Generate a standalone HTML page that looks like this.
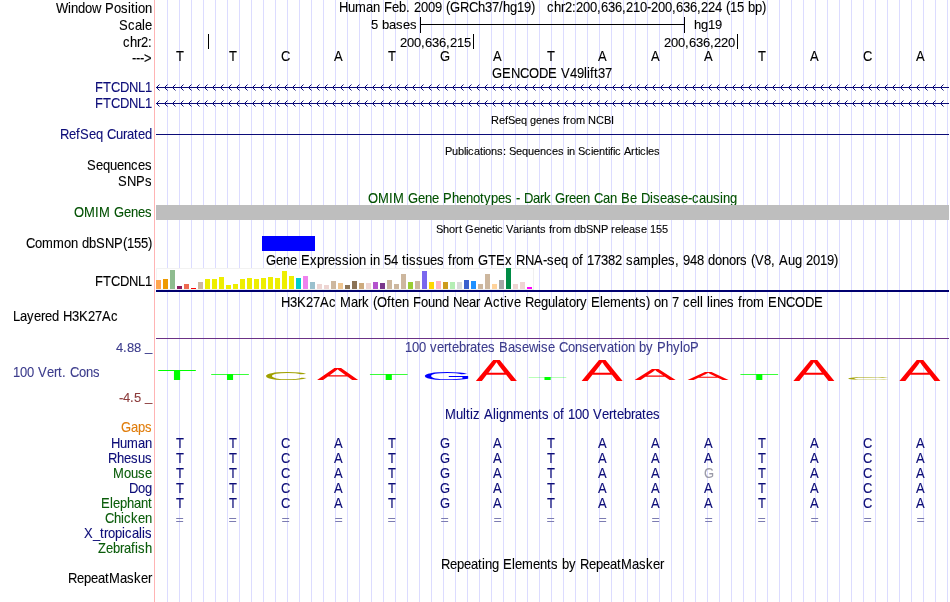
<!DOCTYPE html>
<html><head><meta charset="utf-8"><title>UCSC Genome Browser</title>
<style>html,body{margin:0;padding:0;background:#fff;overflow:hidden}svg{display:block;will-change:transform;font-family:"Liberation Sans",Arial,Helvetica,sans-serif}text{white-space:pre;font-kerning:none;font-variant-ligatures:none;stroke-width:0.1px;paint-order:stroke}</style>
</head><body>
<svg width="950" height="602" viewBox="0 0 950 602">
<rect width="950" height="602" fill="#fff"/>
<g fill="#DCDCFF" shape-rendering="crispEdges">
<rect x="167" y="0" width="1" height="602"/>
<rect x="179" y="0" width="1" height="602"/>
<rect x="191" y="0" width="1" height="602"/>
<rect x="203" y="0" width="1" height="602"/>
<rect x="215" y="0" width="1" height="602"/>
<rect x="227" y="0" width="1" height="602"/>
<rect x="239" y="0" width="1" height="602"/>
<rect x="251" y="0" width="1" height="602"/>
<rect x="263" y="0" width="1" height="602"/>
<rect x="275" y="0" width="1" height="602"/>
<rect x="287" y="0" width="1" height="602"/>
<rect x="299" y="0" width="1" height="602"/>
<rect x="311" y="0" width="1" height="602"/>
<rect x="323" y="0" width="1" height="602"/>
<rect x="335" y="0" width="1" height="602"/>
<rect x="347" y="0" width="1" height="602"/>
<rect x="359" y="0" width="1" height="602"/>
<rect x="371" y="0" width="1" height="602"/>
<rect x="383" y="0" width="1" height="602"/>
<rect x="395" y="0" width="1" height="602"/>
<rect x="407" y="0" width="1" height="602"/>
<rect x="419" y="0" width="1" height="602"/>
<rect x="431" y="0" width="1" height="602"/>
<rect x="443" y="0" width="1" height="602"/>
<rect x="455" y="0" width="1" height="602"/>
<rect x="467" y="0" width="1" height="602"/>
<rect x="479" y="0" width="1" height="602"/>
<rect x="491" y="0" width="1" height="602"/>
<rect x="503" y="0" width="1" height="602"/>
<rect x="515" y="0" width="1" height="602"/>
<rect x="527" y="0" width="1" height="602"/>
<rect x="539" y="0" width="1" height="602"/>
<rect x="551" y="0" width="1" height="602"/>
<rect x="563" y="0" width="1" height="602"/>
<rect x="575" y="0" width="1" height="602"/>
<rect x="587" y="0" width="1" height="602"/>
<rect x="599" y="0" width="1" height="602"/>
<rect x="611" y="0" width="1" height="602"/>
<rect x="623" y="0" width="1" height="602"/>
<rect x="635" y="0" width="1" height="602"/>
<rect x="647" y="0" width="1" height="602"/>
<rect x="659" y="0" width="1" height="602"/>
<rect x="671" y="0" width="1" height="602"/>
<rect x="683" y="0" width="1" height="602"/>
<rect x="695" y="0" width="1" height="602"/>
<rect x="707" y="0" width="1" height="602"/>
<rect x="719" y="0" width="1" height="602"/>
<rect x="731" y="0" width="1" height="602"/>
<rect x="743" y="0" width="1" height="602"/>
<rect x="755" y="0" width="1" height="602"/>
<rect x="767" y="0" width="1" height="602"/>
<rect x="779" y="0" width="1" height="602"/>
<rect x="791" y="0" width="1" height="602"/>
<rect x="803" y="0" width="1" height="602"/>
<rect x="815" y="0" width="1" height="602"/>
<rect x="827" y="0" width="1" height="602"/>
<rect x="839" y="0" width="1" height="602"/>
<rect x="851" y="0" width="1" height="602"/>
<rect x="863" y="0" width="1" height="602"/>
<rect x="875" y="0" width="1" height="602"/>
<rect x="887" y="0" width="1" height="602"/>
<rect x="899" y="0" width="1" height="602"/>
<rect x="911" y="0" width="1" height="602"/>
<rect x="923" y="0" width="1" height="602"/>
<rect x="935" y="0" width="1" height="602"/>
<rect x="947" y="0" width="1" height="602"/>
</g>
<rect x="154" y="0" width="1" height="602" fill="#FFB4B4" shape-rendering="crispEdges"/>
<text transform="scale(0.9286 1)" x="60.31 73.23 76.46 84.00 91.54 99.08 108.77 113.08 122.77 130.31 137.85 141.08 145.38 148.62 156.15" y="13" font-size="14.0" fill="#000" stroke="#000">Window Position</text>
<text transform="scale(0.9286 1)" x="128.15 137.85 145.38 152.92 156.15" y="30" font-size="14.0" fill="#000" stroke="#000">Scale</text>
<text transform="scale(0.9286 1)" x="132.46 140.00 147.54 151.85 159.38" y="47" font-size="14.0" fill="#000" stroke="#000">chr2:</text>
<text transform="scale(0.9286 1)" x="142.15 146.46 150.77 155.08" y="63" font-size="14.0" fill="#000" stroke="#000">---&gt;</text>
<text transform="scale(0.9286 1)" x="365.08 374.77 382.31 394.15 401.69 409.23 413.54 422.15 429.69 437.23 441.54 445.85 453.38 460.92 468.46 476.00 480.31 484.62 495.38 505.08 514.77 522.31 529.85 537.38 541.69 549.23 556.77 564.31 571.85 576.15 580.46 584.77 589.08 596.62 604.15 608.46 616.00 620.31 627.85 635.38 642.92 647.23 654.77 662.31 669.85 674.15 681.69 689.23 696.77 701.08 708.62 716.15 723.69 728.00 735.54 743.08 750.62 754.92 762.46 770.00 777.54 781.85 786.15 793.69 801.23 805.54 813.08 820.62" y="12" font-size="14.0" fill="#000" stroke="#000">Human Feb. 2009 (GRCh37/hg19)   chr2:200,636,210-200,636,224 (15 bp)</text>
<text transform="scale(0.9848 1)" x="376.71 383.82 387.88 394.98 402.09 409.20 416.31" y="28.7" font-size="13.2" fill="#000" stroke="#000">5 bases</text>
<text transform="scale(0.9848 1)" x="704.68 711.78 718.89 726.00" y="28.7" font-size="13.2" fill="#000" stroke="#000">hg19</text>
<g fill="#000" shape-rendering="crispEdges">
<rect x="420" y="17" width="1" height="16"/><rect x="684" y="17" width="1" height="16"/><rect x="420" y="24" width="265" height="1"/>
<rect x="208" y="34" width="1" height="15"/>
<rect x="473" y="34" width="1" height="15"/>
<rect x="737" y="34" width="1" height="15"/>
</g>
<text transform="scale(0.9848 1)" x="406.15 413.26 420.37 427.48 431.54 438.65 445.75 452.86 456.92 464.03 471.14" y="47" font-size="13.2" fill="#000" stroke="#000">200,636,215</text>
<text transform="scale(0.9848 1)" x="674.22 681.32 688.43 695.54 699.60 706.71 713.82 720.92 724.98 732.09 739.20" y="47" font-size="13.2" fill="#000" stroke="#000">200,636,220</text>
<text transform="scale(0.9286 1)" x="189.54" y="61" font-size="14.0" fill="#000" stroke="#000">T</text>
<text transform="scale(0.9286 1)" x="246.62" y="61" font-size="14.0" fill="#000" stroke="#000">T</text>
<text transform="scale(0.9286 1)" x="302.62" y="61" font-size="14.0" fill="#000" stroke="#000">C</text>
<text transform="scale(0.9286 1)" x="359.69" y="61" font-size="14.0" fill="#000" stroke="#000">A</text>
<text transform="scale(0.9286 1)" x="417.85" y="61" font-size="14.0" fill="#000" stroke="#000">T</text>
<text transform="scale(0.9286 1)" x="473.85" y="61" font-size="14.0" fill="#000" stroke="#000">G</text>
<text transform="scale(0.9286 1)" x="530.92" y="61" font-size="14.0" fill="#000" stroke="#000">A</text>
<text transform="scale(0.9286 1)" x="589.08" y="61" font-size="14.0" fill="#000" stroke="#000">T</text>
<text transform="scale(0.9286 1)" x="644.00" y="61" font-size="14.0" fill="#000" stroke="#000">A</text>
<text transform="scale(0.9286 1)" x="701.08" y="61" font-size="14.0" fill="#000" stroke="#000">A</text>
<text transform="scale(0.9286 1)" x="758.15" y="61" font-size="14.0" fill="#000" stroke="#000">A</text>
<text transform="scale(0.9286 1)" x="816.31" y="61" font-size="14.0" fill="#000" stroke="#000">T</text>
<text transform="scale(0.9286 1)" x="872.31" y="61" font-size="14.0" fill="#000" stroke="#000">A</text>
<text transform="scale(0.9286 1)" x="929.38" y="61" font-size="14.0" fill="#000" stroke="#000">C</text>
<text transform="scale(0.9286 1)" x="986.46" y="61" font-size="14.0" fill="#000" stroke="#000">A</text>
<text transform="scale(0.9286 1)" x="529.85 540.62 550.31 560.00 569.69 580.46 590.15 599.85 604.15 613.85 621.38 628.92 632.15 635.38 639.69 644.00 651.54" y="78" font-size="14.0" fill="#000" stroke="#000">GENCODE V49lift37</text>
<rect x="156" y="87" width="793" height="1" fill="#0C0C78" shape-rendering="crispEdges"/>
<path d="M159.5 84.5L156.5 87.5L159.5 90.5M167.5 84.5L164.5 87.5L167.5 90.5M175.5 84.5L172.5 87.5L175.5 90.5M183.5 84.5L180.5 87.5L183.5 90.5M191.5 84.5L188.5 87.5L191.5 90.5M199.5 84.5L196.5 87.5L199.5 90.5M207.5 84.5L204.5 87.5L207.5 90.5M215.5 84.5L212.5 87.5L215.5 90.5M223.5 84.5L220.5 87.5L223.5 90.5M231.5 84.5L228.5 87.5L231.5 90.5M239.5 84.5L236.5 87.5L239.5 90.5M247.5 84.5L244.5 87.5L247.5 90.5M255.5 84.5L252.5 87.5L255.5 90.5M263.5 84.5L260.5 87.5L263.5 90.5M271.5 84.5L268.5 87.5L271.5 90.5M279.5 84.5L276.5 87.5L279.5 90.5M287.5 84.5L284.5 87.5L287.5 90.5M295.5 84.5L292.5 87.5L295.5 90.5M303.5 84.5L300.5 87.5L303.5 90.5M311.5 84.5L308.5 87.5L311.5 90.5M319.5 84.5L316.5 87.5L319.5 90.5M327.5 84.5L324.5 87.5L327.5 90.5M335.5 84.5L332.5 87.5L335.5 90.5M343.5 84.5L340.5 87.5L343.5 90.5M351.5 84.5L348.5 87.5L351.5 90.5M359.5 84.5L356.5 87.5L359.5 90.5M367.5 84.5L364.5 87.5L367.5 90.5M375.5 84.5L372.5 87.5L375.5 90.5M383.5 84.5L380.5 87.5L383.5 90.5M391.5 84.5L388.5 87.5L391.5 90.5M399.5 84.5L396.5 87.5L399.5 90.5M407.5 84.5L404.5 87.5L407.5 90.5M415.5 84.5L412.5 87.5L415.5 90.5M423.5 84.5L420.5 87.5L423.5 90.5M431.5 84.5L428.5 87.5L431.5 90.5M439.5 84.5L436.5 87.5L439.5 90.5M447.5 84.5L444.5 87.5L447.5 90.5M455.5 84.5L452.5 87.5L455.5 90.5M463.5 84.5L460.5 87.5L463.5 90.5M471.5 84.5L468.5 87.5L471.5 90.5M479.5 84.5L476.5 87.5L479.5 90.5M487.5 84.5L484.5 87.5L487.5 90.5M495.5 84.5L492.5 87.5L495.5 90.5M503.5 84.5L500.5 87.5L503.5 90.5M511.5 84.5L508.5 87.5L511.5 90.5M519.5 84.5L516.5 87.5L519.5 90.5M527.5 84.5L524.5 87.5L527.5 90.5M535.5 84.5L532.5 87.5L535.5 90.5M543.5 84.5L540.5 87.5L543.5 90.5M551.5 84.5L548.5 87.5L551.5 90.5M559.5 84.5L556.5 87.5L559.5 90.5M567.5 84.5L564.5 87.5L567.5 90.5M575.5 84.5L572.5 87.5L575.5 90.5M583.5 84.5L580.5 87.5L583.5 90.5M591.5 84.5L588.5 87.5L591.5 90.5M599.5 84.5L596.5 87.5L599.5 90.5M607.5 84.5L604.5 87.5L607.5 90.5M615.5 84.5L612.5 87.5L615.5 90.5M623.5 84.5L620.5 87.5L623.5 90.5M631.5 84.5L628.5 87.5L631.5 90.5M639.5 84.5L636.5 87.5L639.5 90.5M647.5 84.5L644.5 87.5L647.5 90.5M655.5 84.5L652.5 87.5L655.5 90.5M663.5 84.5L660.5 87.5L663.5 90.5M671.5 84.5L668.5 87.5L671.5 90.5M679.5 84.5L676.5 87.5L679.5 90.5M687.5 84.5L684.5 87.5L687.5 90.5M695.5 84.5L692.5 87.5L695.5 90.5M703.5 84.5L700.5 87.5L703.5 90.5M711.5 84.5L708.5 87.5L711.5 90.5M719.5 84.5L716.5 87.5L719.5 90.5M727.5 84.5L724.5 87.5L727.5 90.5M735.5 84.5L732.5 87.5L735.5 90.5M743.5 84.5L740.5 87.5L743.5 90.5M751.5 84.5L748.5 87.5L751.5 90.5M759.5 84.5L756.5 87.5L759.5 90.5M767.5 84.5L764.5 87.5L767.5 90.5M775.5 84.5L772.5 87.5L775.5 90.5M783.5 84.5L780.5 87.5L783.5 90.5M791.5 84.5L788.5 87.5L791.5 90.5M799.5 84.5L796.5 87.5L799.5 90.5M807.5 84.5L804.5 87.5L807.5 90.5M815.5 84.5L812.5 87.5L815.5 90.5M823.5 84.5L820.5 87.5L823.5 90.5M831.5 84.5L828.5 87.5L831.5 90.5M839.5 84.5L836.5 87.5L839.5 90.5M847.5 84.5L844.5 87.5L847.5 90.5M855.5 84.5L852.5 87.5L855.5 90.5M863.5 84.5L860.5 87.5L863.5 90.5M871.5 84.5L868.5 87.5L871.5 90.5M879.5 84.5L876.5 87.5L879.5 90.5M887.5 84.5L884.5 87.5L887.5 90.5M895.5 84.5L892.5 87.5L895.5 90.5M903.5 84.5L900.5 87.5L903.5 90.5M911.5 84.5L908.5 87.5L911.5 90.5M919.5 84.5L916.5 87.5L919.5 90.5M927.5 84.5L924.5 87.5L927.5 90.5M935.5 84.5L932.5 87.5L935.5 90.5M943.5 84.5L940.5 87.5L943.5 90.5" fill="none" stroke="#0C0C78" stroke-width="1"/>
<rect x="156" y="103" width="793" height="1" fill="#0C0C78" shape-rendering="crispEdges"/>
<path d="M159.5 100.5L156.5 103.5L159.5 106.5M167.5 100.5L164.5 103.5L167.5 106.5M175.5 100.5L172.5 103.5L175.5 106.5M183.5 100.5L180.5 103.5L183.5 106.5M191.5 100.5L188.5 103.5L191.5 106.5M199.5 100.5L196.5 103.5L199.5 106.5M207.5 100.5L204.5 103.5L207.5 106.5M215.5 100.5L212.5 103.5L215.5 106.5M223.5 100.5L220.5 103.5L223.5 106.5M231.5 100.5L228.5 103.5L231.5 106.5M239.5 100.5L236.5 103.5L239.5 106.5M247.5 100.5L244.5 103.5L247.5 106.5M255.5 100.5L252.5 103.5L255.5 106.5M263.5 100.5L260.5 103.5L263.5 106.5M271.5 100.5L268.5 103.5L271.5 106.5M279.5 100.5L276.5 103.5L279.5 106.5M287.5 100.5L284.5 103.5L287.5 106.5M295.5 100.5L292.5 103.5L295.5 106.5M303.5 100.5L300.5 103.5L303.5 106.5M311.5 100.5L308.5 103.5L311.5 106.5M319.5 100.5L316.5 103.5L319.5 106.5M327.5 100.5L324.5 103.5L327.5 106.5M335.5 100.5L332.5 103.5L335.5 106.5M343.5 100.5L340.5 103.5L343.5 106.5M351.5 100.5L348.5 103.5L351.5 106.5M359.5 100.5L356.5 103.5L359.5 106.5M367.5 100.5L364.5 103.5L367.5 106.5M375.5 100.5L372.5 103.5L375.5 106.5M383.5 100.5L380.5 103.5L383.5 106.5M391.5 100.5L388.5 103.5L391.5 106.5M399.5 100.5L396.5 103.5L399.5 106.5M407.5 100.5L404.5 103.5L407.5 106.5M415.5 100.5L412.5 103.5L415.5 106.5M423.5 100.5L420.5 103.5L423.5 106.5M431.5 100.5L428.5 103.5L431.5 106.5M439.5 100.5L436.5 103.5L439.5 106.5M447.5 100.5L444.5 103.5L447.5 106.5M455.5 100.5L452.5 103.5L455.5 106.5M463.5 100.5L460.5 103.5L463.5 106.5M471.5 100.5L468.5 103.5L471.5 106.5M479.5 100.5L476.5 103.5L479.5 106.5M487.5 100.5L484.5 103.5L487.5 106.5M495.5 100.5L492.5 103.5L495.5 106.5M503.5 100.5L500.5 103.5L503.5 106.5M511.5 100.5L508.5 103.5L511.5 106.5M519.5 100.5L516.5 103.5L519.5 106.5M527.5 100.5L524.5 103.5L527.5 106.5M535.5 100.5L532.5 103.5L535.5 106.5M543.5 100.5L540.5 103.5L543.5 106.5M551.5 100.5L548.5 103.5L551.5 106.5M559.5 100.5L556.5 103.5L559.5 106.5M567.5 100.5L564.5 103.5L567.5 106.5M575.5 100.5L572.5 103.5L575.5 106.5M583.5 100.5L580.5 103.5L583.5 106.5M591.5 100.5L588.5 103.5L591.5 106.5M599.5 100.5L596.5 103.5L599.5 106.5M607.5 100.5L604.5 103.5L607.5 106.5M615.5 100.5L612.5 103.5L615.5 106.5M623.5 100.5L620.5 103.5L623.5 106.5M631.5 100.5L628.5 103.5L631.5 106.5M639.5 100.5L636.5 103.5L639.5 106.5M647.5 100.5L644.5 103.5L647.5 106.5M655.5 100.5L652.5 103.5L655.5 106.5M663.5 100.5L660.5 103.5L663.5 106.5M671.5 100.5L668.5 103.5L671.5 106.5M679.5 100.5L676.5 103.5L679.5 106.5M687.5 100.5L684.5 103.5L687.5 106.5M695.5 100.5L692.5 103.5L695.5 106.5M703.5 100.5L700.5 103.5L703.5 106.5M711.5 100.5L708.5 103.5L711.5 106.5M719.5 100.5L716.5 103.5L719.5 106.5M727.5 100.5L724.5 103.5L727.5 106.5M735.5 100.5L732.5 103.5L735.5 106.5M743.5 100.5L740.5 103.5L743.5 106.5M751.5 100.5L748.5 103.5L751.5 106.5M759.5 100.5L756.5 103.5L759.5 106.5M767.5 100.5L764.5 103.5L767.5 106.5M775.5 100.5L772.5 103.5L775.5 106.5M783.5 100.5L780.5 103.5L783.5 106.5M791.5 100.5L788.5 103.5L791.5 106.5M799.5 100.5L796.5 103.5L799.5 106.5M807.5 100.5L804.5 103.5L807.5 106.5M815.5 100.5L812.5 103.5L815.5 106.5M823.5 100.5L820.5 103.5L823.5 106.5M831.5 100.5L828.5 103.5L831.5 106.5M839.5 100.5L836.5 103.5L839.5 106.5M847.5 100.5L844.5 103.5L847.5 106.5M855.5 100.5L852.5 103.5L855.5 106.5M863.5 100.5L860.5 103.5L863.5 106.5M871.5 100.5L868.5 103.5L871.5 106.5M879.5 100.5L876.5 103.5L879.5 106.5M887.5 100.5L884.5 103.5L887.5 106.5M895.5 100.5L892.5 103.5L895.5 106.5M903.5 100.5L900.5 103.5L903.5 106.5M911.5 100.5L908.5 103.5L911.5 106.5M919.5 100.5L916.5 103.5L919.5 106.5M927.5 100.5L924.5 103.5L927.5 106.5M935.5 100.5L932.5 103.5L935.5 106.5M943.5 100.5L940.5 103.5L943.5 106.5" fill="none" stroke="#0C0C78" stroke-width="1"/>
<text transform="scale(0.9286 1)" x="102.31 110.92 119.54 129.23 138.92 148.62 156.15" y="92" font-size="14.0" fill="#0C0C78" stroke="#0C0C78">FTCDNL1</text>
<text transform="scale(0.9286 1)" x="102.31 110.92 119.54 129.23 138.92 148.62 156.15" y="108" font-size="14.0" fill="#0C0C78" stroke="#0C0C78">FTCDNL1</text>
<text transform="scale(0.9821 1)" x="499.93 508.07 514.18 517.24 524.36 530.47 536.58 539.64 545.75 551.85 557.96 564.07 570.18 573.24 576.29 580.36 586.47 595.64 598.69 606.84 614.98 622.11" y="124" font-size="11.2" fill="#000" stroke="#000">RefSeq genes from NCBI</text>
<rect x="156" y="134" width="793" height="1" fill="#0C0C78" shape-rendering="crispEdges"/>
<text transform="scale(0.9286 1)" x="64.62 74.31 81.85 86.15 95.85 103.38 110.92 115.23 124.92 132.46 136.77 144.31 148.62 156.15" y="139" font-size="14.0" fill="#0C0C78" stroke="#0C0C78">RefSeq Curated</text>
<text transform="scale(0.9821 1)" x="453.09 460.22 466.33 472.44 474.47 476.51 482.62 488.73 491.78 493.82 499.93 506.04 512.15 515.20 518.25 525.38 531.49 537.60 543.71 549.82 555.93 562.04 568.15 574.25 577.31 579.35 585.45 588.51 595.64 601.75 603.78 609.89 616.00 619.05 621.09 624.15 626.18 632.29 635.35 642.47 646.55 649.60 651.64 657.75 659.78 665.89" y="155" font-size="11.2" fill="#000" stroke="#000">Publications: Sequences in Scientific Articles</text>
<text transform="scale(0.9286 1)" x="93.69 103.38 110.92 118.46 126.00 133.54 141.08 148.62 156.15" y="170" font-size="14.0" fill="#000" stroke="#000">Sequences</text>
<text transform="scale(0.9286 1)" x="127.08 136.77 146.46 156.15" y="186" font-size="14.0" fill="#000" stroke="#000">SNPs</text>
<text transform="scale(0.9286 1)" x="396.31 407.08 418.92 423.23 435.08 439.38 450.15 457.69 465.23 472.77 477.08 486.77 494.31 501.85 509.38 516.92 521.23 528.77 536.31 543.85 551.38 555.69 560.00 564.31 574.00 581.54 585.85 593.38 597.69 608.46 612.77 620.31 627.85 635.38 639.69 649.38 656.92 664.46 668.77 678.46 686.00 690.31 700.00 703.23 710.77 718.31 725.85 733.38 740.92 745.23 752.77 760.31 767.85 775.38 778.62 786.15" y="203" font-size="14.0" fill="#005000" stroke="#005000">OMIM Gene Phenotypes - Dark Green Can Be Disease-causing</text>
<rect x="156" y="205" width="793" height="15" fill="#BEBEBE" shape-rendering="crispEdges"/>
<text transform="scale(0.9286 1)" x="79.69 90.46 102.31 106.62 118.46 122.77 133.54 141.08 148.62 156.15" y="217" font-size="14.0" fill="#005000" stroke="#005000">OMIM Genes</text>
<text transform="scale(0.9821 1)" x="443.93 451.05 457.16 463.27 467.35 470.40 473.45 482.62 488.73 494.84 500.95 504.00 506.04 512.15 515.20 522.33 528.44 532.51 534.55 540.65 546.76 549.82 555.93 558.98 562.04 566.11 572.22 581.38 584.44 590.55 596.65 603.78 611.93 619.05 622.11 626.18 632.29 634.33 640.44 646.55 652.65 658.76 661.82 667.93 674.04" y="233" font-size="11.2" fill="#000" stroke="#000">Short Genetic Variants from dbSNP release 155</text>
<rect x="262" y="236" width="53" height="15" fill="#0000FF" shape-rendering="crispEdges"/>
<text transform="scale(0.9286 1)" x="28.00 37.69 45.23 57.08 68.92 76.46 84.00 88.31 95.85 103.38 113.08 122.77 132.46 136.77 144.31 151.85 159.38" y="248" font-size="14.0" fill="#000" stroke="#000">Common dbSNP(155)</text>
<text transform="scale(0.9286 1)" x="286.46 297.23 304.77 312.31 319.85 324.15 333.85 341.38 348.92 353.23 360.77 368.31 375.85 379.08 386.62 394.15 398.46 401.69 409.23 413.54 421.08 428.62 432.92 437.23 440.46 448.00 455.54 463.08 470.62 478.15 482.46 486.77 491.08 498.62 510.46 514.77 525.54 534.15 543.85 551.38 555.69 565.38 575.08 584.77 589.08 596.62 604.15 611.69 616.00 623.54 627.85 632.15 639.69 647.23 654.77 662.31 669.85 674.15 681.69 689.23 701.08 708.62 711.85 719.38 726.92 731.23 735.54 743.08 750.62 758.15 762.46 770.00 777.54 785.08 792.62 796.92 804.46 808.77 813.08 822.77 830.31 834.62 838.92 848.62 856.15 863.69 868.00 875.54 883.08 890.62 898.15" y="265" font-size="14.0" fill="#000" stroke="#000">Gene Expression in 54 tissues from GTEx RNA-seq of 17382 samples, 948 donors (V8, Aug 2019)</text>
<rect x="156" y="268" width="378" height="22" fill="#fff" shape-rendering="crispEdges"/>
<rect x="156" y="268" width="378" height="1" fill="#F2F2F2" shape-rendering="crispEdges"/><rect x="533" y="268" width="1" height="22" fill="#F0F0F0" shape-rendering="crispEdges"/><rect x="156" y="268" width="1" height="22" fill="#F4F4F4" shape-rendering="crispEdges"/><rect x="156" y="289" width="378" height="1" fill="#EDEDED" shape-rendering="crispEdges"/>
<g shape-rendering="crispEdges">
<rect x="156" y="280" width="5" height="9" fill="#FFA54F"/>
<rect x="163" y="279" width="5" height="10" fill="#EE9A00"/>
<rect x="170" y="270" width="5" height="19" fill="#8FBC8F"/>
<rect x="177" y="286" width="5" height="3" fill="#8B1C62"/>
<rect x="184" y="284" width="5" height="5" fill="#EE6A50"/>
<rect x="191" y="288" width="5" height="1" fill="#FF0000"/>
<rect x="198" y="282" width="5" height="7" fill="#CDB79E"/>
<rect x="205" y="279" width="5" height="10" fill="#EEEE00"/>
<rect x="212" y="279" width="5" height="10" fill="#EEEE00"/>
<rect x="219" y="277" width="5" height="12" fill="#EEEE00"/>
<rect x="226" y="285" width="5" height="4" fill="#EEEE00"/>
<rect x="233" y="284" width="5" height="5" fill="#EEEE00"/>
<rect x="240" y="279" width="5" height="10" fill="#EEEE00"/>
<rect x="247" y="278" width="5" height="11" fill="#EEEE00"/>
<rect x="254" y="279" width="5" height="10" fill="#EEEE00"/>
<rect x="261" y="278" width="5" height="11" fill="#EEEE00"/>
<rect x="268" y="277" width="5" height="12" fill="#EEEE00"/>
<rect x="275" y="278" width="5" height="11" fill="#EEEE00"/>
<rect x="282" y="271" width="5" height="18" fill="#EEEE00"/>
<rect x="289" y="276" width="5" height="13" fill="#EEEE00"/>
<rect x="296" y="278" width="5" height="11" fill="#00CDCD"/>
<rect x="303" y="276" width="5" height="13" fill="#EE82EE"/>
<rect x="310" y="282" width="5" height="7" fill="#9AC0CD"/>
<rect x="317" y="284" width="5" height="5" fill="#EED5D2"/>
<rect x="324" y="285" width="5" height="4" fill="#EED5D2"/>
<rect x="331" y="281" width="5" height="8" fill="#CDB79E"/>
<rect x="338" y="283" width="5" height="6" fill="#EEC591"/>
<rect x="345" y="285" width="5" height="4" fill="#8B7355"/>
<rect x="352" y="281" width="5" height="8" fill="#8B7355"/>
<rect x="359" y="283" width="5" height="6" fill="#CDAA7D"/>
<rect x="366" y="283" width="5" height="6" fill="#EED5D2"/>
<rect x="373" y="282" width="5" height="7" fill="#B452CD"/>
<rect x="380" y="283" width="5" height="6" fill="#7A378B"/>
<rect x="387" y="280" width="5" height="9" fill="#CDB79E"/>
<rect x="394" y="284" width="5" height="5" fill="#CDB79E"/>
<rect x="401" y="274" width="5" height="15" fill="#CDB79E"/>
<rect x="408" y="282" width="5" height="7" fill="#9ACD32"/>
<rect x="415" y="281" width="5" height="8" fill="#CDB79E"/>
<rect x="422" y="271" width="5" height="18" fill="#7A67EE"/>
<rect x="429" y="282" width="5" height="7" fill="#FFD700"/>
<rect x="436" y="281" width="5" height="8" fill="#FFB6C1"/>
<rect x="443" y="282" width="5" height="7" fill="#CD9B1D"/>
<rect x="450" y="282" width="5" height="7" fill="#B4EEB4"/>
<rect x="457" y="282" width="5" height="7" fill="#D9D9D9"/>
<rect x="464" y="280" width="5" height="9" fill="#3A5FCD"/>
<rect x="471" y="281" width="5" height="8" fill="#1E90FF"/>
<rect x="478" y="284" width="5" height="5" fill="#CDB79E"/>
<rect x="485" y="274" width="5" height="15" fill="#CDB79E"/>
<rect x="492" y="284" width="5" height="5" fill="#FFD39B"/>
<rect x="499" y="280" width="5" height="9" fill="#A6A6A6"/>
<rect x="506" y="268" width="5" height="21" fill="#008B45"/>
<rect x="513" y="284" width="5" height="5" fill="#EED5D2"/>
<rect x="520" y="282" width="5" height="7" fill="#EED5D2"/>
<rect x="527" y="287" width="5" height="2" fill="#FF00FF"/>
</g>
<rect x="156" y="290" width="793" height="2" fill="#000070" shape-rendering="crispEdges"/>
<text transform="scale(0.9286 1)" x="102.31 110.92 119.54 129.23 138.92 148.62 156.15" y="286" font-size="14.0" fill="#000" stroke="#000">FTCDNL1</text>
<text transform="scale(0.9286 1)" x="302.62 312.31 319.85 329.54 337.08 344.62 354.31 361.85 366.15 378.00 385.54 389.85 397.38 401.69 406.00 416.77 421.08 425.38 432.92 440.46 444.77 453.38 460.92 468.46 476.00 483.54 487.85 497.54 505.08 512.62 516.92 521.23 530.92 538.46 542.77 546.00 553.54 561.08 565.38 575.08 582.62 590.15 597.69 600.92 608.46 612.77 620.31 624.62 632.15 636.46 646.15 649.38 656.92 668.77 676.31 683.85 688.15 695.69 700.00 704.31 711.85 719.38 723.69 731.23 735.54 743.08 750.62 753.85 757.08 761.38 764.62 767.85 775.38 782.92 790.46 794.77 799.08 803.38 810.92 822.77 827.08 836.77 846.46 856.15 866.92 876.62" y="307" font-size="14.0" fill="#000" stroke="#000">H3K27Ac Mark (Often Found Near Active Regulatory Elements) on 7 cell lines from ENCODE</text>
<text transform="scale(0.9286 1)" x="14.00 21.54 29.08 36.62 44.15 48.46 56.00 63.54 67.85 77.54 85.08 94.77 102.31 109.85 119.54" y="321" font-size="14.0" fill="#000" stroke="#000">Layered H3K27Ac</text>
<rect x="156" y="338" width="793" height="1" fill="#6B3185" shape-rendering="crispEdges"/>
<text transform="scale(0.9286 1)" x="436.15 443.69 451.23 458.77 463.08 470.62 478.15 482.46 486.77 494.31 501.85 506.15 513.69 518.00 525.54 533.08 537.38 547.08 554.62 562.15 569.69 579.38 582.62 590.15 597.69 602.00 611.69 619.23 626.77 634.31 641.85 646.15 653.69 661.23 665.54 668.77 676.31 683.85 688.15 695.69 703.23 707.54 717.23 724.77 732.31 735.54 743.08" y="352" font-size="14.0" fill="#3C3C8C" stroke="#3C3C8C">100 vertebrates Basewise Conservation by PhyloP</text>
<text transform="scale(0.9848 1)" x="117.78 124.89 128.95 136.06" y="352" font-size="13.2" fill="#3C3C8C" stroke="#3C3C8C">4.88</text>
<text transform="scale(0.9848 1)" x="147.23" y="351.3" font-size="13.2" fill="#3C3C8C" stroke="#3C3C8C">_</text>
<text transform="scale(0.9286 1)" x="14.00 21.54 29.08 36.62 40.92 50.62 58.15 62.46 66.77 71.08 75.38 85.08 92.62 100.15" y="377" font-size="14.0" fill="#3C3C8C" stroke="#3C3C8C">100 Vert. Cons</text>
<text transform="scale(0.9848 1)" x="120.83 124.89 132.00 136.06" y="402" font-size="13.2" fill="#8C3C3C" stroke="#8C3C3C">-4.5</text>
<text transform="scale(0.9848 1)" x="147.23" y="401.3" font-size="13.2" fill="#8C3C3C" stroke="#8C3C3C">_</text>
<text transform="matrix(0.6650 0 0 0.1454 156.71 380.00)" font-size="100" text-rendering="geometricPrecision" fill="#00FF00">T</text>
<text transform="matrix(0.6650 0 0 0.0872 209.64 380.00)" font-size="100" text-rendering="geometricPrecision" fill="#00FF00">T</text>
<text transform="matrix(0.6395 0 0 0.1130 262.71 379.89)" font-size="100" text-rendering="geometricPrecision" fill="#A0A000">C</text>
<text transform="matrix(0.6183 0 0 0.1744 316.97 380.00)" font-size="100" text-rendering="geometricPrecision" fill="#FF0000">A</text>
<text transform="matrix(0.6650 0 0 0.0872 368.43 380.00)" font-size="100" text-rendering="geometricPrecision" fill="#00FF00">T</text>
<text transform="matrix(0.6633 0 0 0.1130 421.51 379.89)" font-size="100" text-rendering="geometricPrecision" fill="#0000FF">G</text>
<text transform="matrix(0.6183 0 0 0.3052 475.76 381.00)" font-size="100" text-rendering="geometricPrecision" fill="#FF0000">A</text>
<text transform="matrix(0.6650 0 0 0.0436 527.22 380.00)" font-size="100" text-rendering="geometricPrecision" fill="#00FF00">T</text>
<text transform="matrix(0.6183 0 0 0.3052 581.62 381.00)" font-size="100" text-rendering="geometricPrecision" fill="#FF0000">A</text>
<text transform="matrix(0.6183 0 0 0.1599 634.55 380.00)" font-size="100" text-rendering="geometricPrecision" fill="#FF0000">A</text>
<text transform="matrix(0.6183 0 0 0.1163 687.48 380.00)" font-size="100" text-rendering="geometricPrecision" fill="#FF0000">A</text>
<text transform="matrix(0.6650 0 0 0.0872 738.94 380.00)" font-size="100" text-rendering="geometricPrecision" fill="#00FF00">T</text>
<text transform="matrix(0.6183 0 0 0.3052 793.34 381.00)" font-size="100" text-rendering="geometricPrecision" fill="#FF0000">A</text>
<text transform="matrix(0.6395 0 0 0.0424 844.94 379.96)" font-size="100" text-rendering="geometricPrecision" fill="#A0A000" opacity="0.95">C</text>
<text transform="matrix(0.6183 0 0 0.3052 899.20 381.00)" font-size="100" text-rendering="geometricPrecision" fill="#FF0000">A</text>
<text transform="scale(0.9286 1)" x="479.23 491.08 498.62 501.85 506.15 509.38 516.92 521.23 530.92 534.15 537.38 544.92 552.46 564.31 571.85 579.38 583.69 591.23 595.54 603.08 607.38 611.69 619.23 626.77 634.31 638.62 648.31 655.85 660.15 664.46 672.00 679.54 683.85 691.38 695.69 703.23" y="419" font-size="14.0" fill="#0C0C78" stroke="#0C0C78">Multiz Alignments of 100 Vertebrates</text>
<text transform="scale(0.9286 1)" x="130.31 141.08 148.62 156.15" y="432.4" font-size="14.0" fill="#E07C0A" stroke="#E07C0A">Gaps</text>
<text transform="scale(0.9286 1)" x="119.54 129.23 136.77 148.62 156.15" y="448" font-size="14.0" fill="#0C0C78" stroke="#0C0C78">Human</text>
<text transform="scale(0.9286 1)" x="189.54" y="448" font-size="14.0" fill="#0C0C78" stroke="#0C0C78">T</text>
<text transform="scale(0.9286 1)" x="246.62" y="448" font-size="14.0" fill="#0C0C78" stroke="#0C0C78">T</text>
<text transform="scale(0.9286 1)" x="302.62" y="448" font-size="14.0" fill="#0C0C78" stroke="#0C0C78">C</text>
<text transform="scale(0.9286 1)" x="359.69" y="448" font-size="14.0" fill="#0C0C78" stroke="#0C0C78">A</text>
<text transform="scale(0.9286 1)" x="417.85" y="448" font-size="14.0" fill="#0C0C78" stroke="#0C0C78">T</text>
<text transform="scale(0.9286 1)" x="473.85" y="448" font-size="14.0" fill="#0C0C78" stroke="#0C0C78">G</text>
<text transform="scale(0.9286 1)" x="530.92" y="448" font-size="14.0" fill="#0C0C78" stroke="#0C0C78">A</text>
<text transform="scale(0.9286 1)" x="589.08" y="448" font-size="14.0" fill="#0C0C78" stroke="#0C0C78">T</text>
<text transform="scale(0.9286 1)" x="644.00" y="448" font-size="14.0" fill="#0C0C78" stroke="#0C0C78">A</text>
<text transform="scale(0.9286 1)" x="701.08" y="448" font-size="14.0" fill="#0C0C78" stroke="#0C0C78">A</text>
<text transform="scale(0.9286 1)" x="758.15" y="448" font-size="14.0" fill="#0C0C78" stroke="#0C0C78">A</text>
<text transform="scale(0.9286 1)" x="816.31" y="448" font-size="14.0" fill="#0C0C78" stroke="#0C0C78">T</text>
<text transform="scale(0.9286 1)" x="872.31" y="448" font-size="14.0" fill="#0C0C78" stroke="#0C0C78">A</text>
<text transform="scale(0.9286 1)" x="929.38" y="448" font-size="14.0" fill="#0C0C78" stroke="#0C0C78">C</text>
<text transform="scale(0.9286 1)" x="986.46" y="448" font-size="14.0" fill="#0C0C78" stroke="#0C0C78">A</text>
<text transform="scale(0.9286 1)" x="116.31 126.00 133.54 141.08 148.62 156.15" y="463" font-size="14.0" fill="#0C0C78" stroke="#0C0C78">Rhesus</text>
<text transform="scale(0.9286 1)" x="189.54" y="463" font-size="14.0" fill="#0C0C78" stroke="#0C0C78">T</text>
<text transform="scale(0.9286 1)" x="246.62" y="463" font-size="14.0" fill="#0C0C78" stroke="#0C0C78">T</text>
<text transform="scale(0.9286 1)" x="302.62" y="463" font-size="14.0" fill="#0C0C78" stroke="#0C0C78">C</text>
<text transform="scale(0.9286 1)" x="359.69" y="463" font-size="14.0" fill="#0C0C78" stroke="#0C0C78">A</text>
<text transform="scale(0.9286 1)" x="417.85" y="463" font-size="14.0" fill="#0C0C78" stroke="#0C0C78">T</text>
<text transform="scale(0.9286 1)" x="473.85" y="463" font-size="14.0" fill="#0C0C78" stroke="#0C0C78">G</text>
<text transform="scale(0.9286 1)" x="530.92" y="463" font-size="14.0" fill="#0C0C78" stroke="#0C0C78">A</text>
<text transform="scale(0.9286 1)" x="589.08" y="463" font-size="14.0" fill="#0C0C78" stroke="#0C0C78">T</text>
<text transform="scale(0.9286 1)" x="644.00" y="463" font-size="14.0" fill="#0C0C78" stroke="#0C0C78">A</text>
<text transform="scale(0.9286 1)" x="701.08" y="463" font-size="14.0" fill="#0C0C78" stroke="#0C0C78">A</text>
<text transform="scale(0.9286 1)" x="758.15" y="463" font-size="14.0" fill="#0C0C78" stroke="#0C0C78">A</text>
<text transform="scale(0.9286 1)" x="816.31" y="463" font-size="14.0" fill="#0C0C78" stroke="#0C0C78">T</text>
<text transform="scale(0.9286 1)" x="872.31" y="463" font-size="14.0" fill="#0C0C78" stroke="#0C0C78">A</text>
<text transform="scale(0.9286 1)" x="929.38" y="463" font-size="14.0" fill="#0C0C78" stroke="#0C0C78">C</text>
<text transform="scale(0.9286 1)" x="986.46" y="463" font-size="14.0" fill="#0C0C78" stroke="#0C0C78">A</text>
<text transform="scale(0.9286 1)" x="121.69 133.54 141.08 148.62 156.15" y="478" font-size="14.0" fill="#0A5C0A" stroke="#0A5C0A">Mouse</text>
<text transform="scale(0.9286 1)" x="189.54" y="478" font-size="14.0" fill="#0C0C78" stroke="#0C0C78">T</text>
<text transform="scale(0.9286 1)" x="246.62" y="478" font-size="14.0" fill="#0C0C78" stroke="#0C0C78">T</text>
<text transform="scale(0.9286 1)" x="302.62" y="478" font-size="14.0" fill="#0C0C78" stroke="#0C0C78">C</text>
<text transform="scale(0.9286 1)" x="359.69" y="478" font-size="14.0" fill="#0C0C78" stroke="#0C0C78">A</text>
<text transform="scale(0.9286 1)" x="417.85" y="478" font-size="14.0" fill="#0C0C78" stroke="#0C0C78">T</text>
<text transform="scale(0.9286 1)" x="473.85" y="478" font-size="14.0" fill="#0C0C78" stroke="#0C0C78">G</text>
<text transform="scale(0.9286 1)" x="530.92" y="478" font-size="14.0" fill="#0C0C78" stroke="#0C0C78">A</text>
<text transform="scale(0.9286 1)" x="589.08" y="478" font-size="14.0" fill="#0C0C78" stroke="#0C0C78">T</text>
<text transform="scale(0.9286 1)" x="644.00" y="478" font-size="14.0" fill="#0C0C78" stroke="#0C0C78">A</text>
<text transform="scale(0.9286 1)" x="701.08" y="478" font-size="14.0" fill="#0C0C78" stroke="#0C0C78">A</text>
<text transform="scale(0.9286 1)" x="758.15" y="478" font-size="14.0" fill="#9A9AA8" stroke="#9A9AA8">G</text>
<text transform="scale(0.9286 1)" x="816.31" y="478" font-size="14.0" fill="#0C0C78" stroke="#0C0C78">T</text>
<text transform="scale(0.9286 1)" x="872.31" y="478" font-size="14.0" fill="#0C0C78" stroke="#0C0C78">A</text>
<text transform="scale(0.9286 1)" x="929.38" y="478" font-size="14.0" fill="#0C0C78" stroke="#0C0C78">C</text>
<text transform="scale(0.9286 1)" x="986.46" y="478" font-size="14.0" fill="#0C0C78" stroke="#0C0C78">A</text>
<text transform="scale(0.9286 1)" x="138.92 148.62 156.15" y="493" font-size="14.0" fill="#0C0C78" stroke="#0C0C78">Dog</text>
<text transform="scale(0.9286 1)" x="189.54" y="493" font-size="14.0" fill="#0C0C78" stroke="#0C0C78">T</text>
<text transform="scale(0.9286 1)" x="246.62" y="493" font-size="14.0" fill="#0C0C78" stroke="#0C0C78">T</text>
<text transform="scale(0.9286 1)" x="302.62" y="493" font-size="14.0" fill="#0C0C78" stroke="#0C0C78">C</text>
<text transform="scale(0.9286 1)" x="359.69" y="493" font-size="14.0" fill="#0C0C78" stroke="#0C0C78">A</text>
<text transform="scale(0.9286 1)" x="417.85" y="493" font-size="14.0" fill="#0C0C78" stroke="#0C0C78">T</text>
<text transform="scale(0.9286 1)" x="473.85" y="493" font-size="14.0" fill="#0C0C78" stroke="#0C0C78">G</text>
<text transform="scale(0.9286 1)" x="530.92" y="493" font-size="14.0" fill="#0C0C78" stroke="#0C0C78">A</text>
<text transform="scale(0.9286 1)" x="589.08" y="493" font-size="14.0" fill="#0C0C78" stroke="#0C0C78">T</text>
<text transform="scale(0.9286 1)" x="644.00" y="493" font-size="14.0" fill="#0C0C78" stroke="#0C0C78">A</text>
<text transform="scale(0.9286 1)" x="701.08" y="493" font-size="14.0" fill="#0C0C78" stroke="#0C0C78">A</text>
<text transform="scale(0.9286 1)" x="758.15" y="493" font-size="14.0" fill="#0C0C78" stroke="#0C0C78">A</text>
<text transform="scale(0.9286 1)" x="816.31" y="493" font-size="14.0" fill="#0C0C78" stroke="#0C0C78">T</text>
<text transform="scale(0.9286 1)" x="872.31" y="493" font-size="14.0" fill="#0C0C78" stroke="#0C0C78">A</text>
<text transform="scale(0.9286 1)" x="929.38" y="493" font-size="14.0" fill="#0C0C78" stroke="#0C0C78">C</text>
<text transform="scale(0.9286 1)" x="986.46" y="493" font-size="14.0" fill="#0C0C78" stroke="#0C0C78">A</text>
<text transform="scale(0.9286 1)" x="108.77 118.46 121.69 129.23 136.77 144.31 151.85 159.38" y="508" font-size="14.0" fill="#0A5C0A" stroke="#0A5C0A">Elephant</text>
<text transform="scale(0.9286 1)" x="189.54" y="508" font-size="14.0" fill="#0C0C78" stroke="#0C0C78">T</text>
<text transform="scale(0.9286 1)" x="246.62" y="508" font-size="14.0" fill="#0C0C78" stroke="#0C0C78">T</text>
<text transform="scale(0.9286 1)" x="302.62" y="508" font-size="14.0" fill="#0C0C78" stroke="#0C0C78">C</text>
<text transform="scale(0.9286 1)" x="359.69" y="508" font-size="14.0" fill="#0C0C78" stroke="#0C0C78">A</text>
<text transform="scale(0.9286 1)" x="417.85" y="508" font-size="14.0" fill="#0C0C78" stroke="#0C0C78">T</text>
<text transform="scale(0.9286 1)" x="473.85" y="508" font-size="14.0" fill="#0C0C78" stroke="#0C0C78">G</text>
<text transform="scale(0.9286 1)" x="530.92" y="508" font-size="14.0" fill="#0C0C78" stroke="#0C0C78">A</text>
<text transform="scale(0.9286 1)" x="589.08" y="508" font-size="14.0" fill="#0C0C78" stroke="#0C0C78">T</text>
<text transform="scale(0.9286 1)" x="644.00" y="508" font-size="14.0" fill="#0C0C78" stroke="#0C0C78">A</text>
<text transform="scale(0.9286 1)" x="701.08" y="508" font-size="14.0" fill="#0C0C78" stroke="#0C0C78">A</text>
<text transform="scale(0.9286 1)" x="758.15" y="508" font-size="14.0" fill="#0C0C78" stroke="#0C0C78">A</text>
<text transform="scale(0.9286 1)" x="816.31" y="508" font-size="14.0" fill="#0C0C78" stroke="#0C0C78">T</text>
<text transform="scale(0.9286 1)" x="872.31" y="508" font-size="14.0" fill="#0C0C78" stroke="#0C0C78">A</text>
<text transform="scale(0.9286 1)" x="929.38" y="508" font-size="14.0" fill="#0C0C78" stroke="#0C0C78">C</text>
<text transform="scale(0.9286 1)" x="986.46" y="508" font-size="14.0" fill="#0C0C78" stroke="#0C0C78">A</text>
<text transform="scale(0.9286 1)" x="113.08 122.77 130.31 133.54 141.08 148.62 156.15" y="523" font-size="14.0" fill="#0A5C0A" stroke="#0A5C0A">Chicken</text>
<text transform="translate(175.6 523.9) scale(1.2 1)" font-size="11.9" fill="#7C7CB2">=</text>
<text transform="translate(228.6 523.9) scale(1.2 1)" font-size="11.9" fill="#7C7CB2">=</text>
<text transform="translate(281.6 523.9) scale(1.2 1)" font-size="11.9" fill="#7C7CB2">=</text>
<text transform="translate(334.6 523.9) scale(1.2 1)" font-size="11.9" fill="#7C7CB2">=</text>
<text transform="translate(387.6 523.9) scale(1.2 1)" font-size="11.9" fill="#7C7CB2">=</text>
<text transform="translate(440.6 523.9) scale(1.2 1)" font-size="11.9" fill="#7C7CB2">=</text>
<text transform="translate(493.6 523.9) scale(1.2 1)" font-size="11.9" fill="#7C7CB2">=</text>
<text transform="translate(546.6 523.9) scale(1.2 1)" font-size="11.9" fill="#7C7CB2">=</text>
<text transform="translate(598.6 523.9) scale(1.2 1)" font-size="11.9" fill="#7C7CB2">=</text>
<text transform="translate(651.6 523.9) scale(1.2 1)" font-size="11.9" fill="#7C7CB2">=</text>
<text transform="translate(704.6 523.9) scale(1.2 1)" font-size="11.9" fill="#7C7CB2">=</text>
<text transform="translate(757.6 523.9) scale(1.2 1)" font-size="11.9" fill="#7C7CB2">=</text>
<text transform="translate(810.6 523.9) scale(1.2 1)" font-size="11.9" fill="#7C7CB2">=</text>
<text transform="translate(863.6 523.9) scale(1.2 1)" font-size="11.9" fill="#7C7CB2">=</text>
<text transform="translate(916.6 523.9) scale(1.2 1)" font-size="11.9" fill="#7C7CB2">=</text>
<text transform="scale(0.9286 1)" x="90.46 100.15 107.69 112.00 116.31 123.85 131.38 134.62 142.15 149.69 152.92 156.15" y="538" font-size="14.0" fill="#0C0C78" stroke="#0C0C78">X_tropicalis</text>
<text transform="scale(0.9286 1)" x="105.54 114.15 121.69 129.23 133.54 141.08 145.38 148.62 156.15" y="553" font-size="14.0" fill="#0A5C0A" stroke="#0A5C0A">Zebrafish</text>
<text transform="scale(0.9286 1)" x="474.92 484.62 492.15 499.69 507.23 514.77 519.08 522.31 529.85 537.38 541.69 551.38 554.62 562.15 574.00 581.54 589.08 593.38 600.92 605.23 612.77 620.31 624.62 634.31 641.85 649.38 656.92 664.46 668.77 680.62 688.15 695.69 703.23 710.77" y="569" font-size="14.0" fill="#000" stroke="#000">Repeating Elements by RepeatMasker</text>
<text transform="scale(0.9286 1)" x="73.23 82.92 90.46 98.00 105.54 113.08 117.38 129.23 136.77 144.31 151.85 159.38" y="583" font-size="14.0" fill="#000" stroke="#000">RepeatMasker</text>
</svg></body></html>
